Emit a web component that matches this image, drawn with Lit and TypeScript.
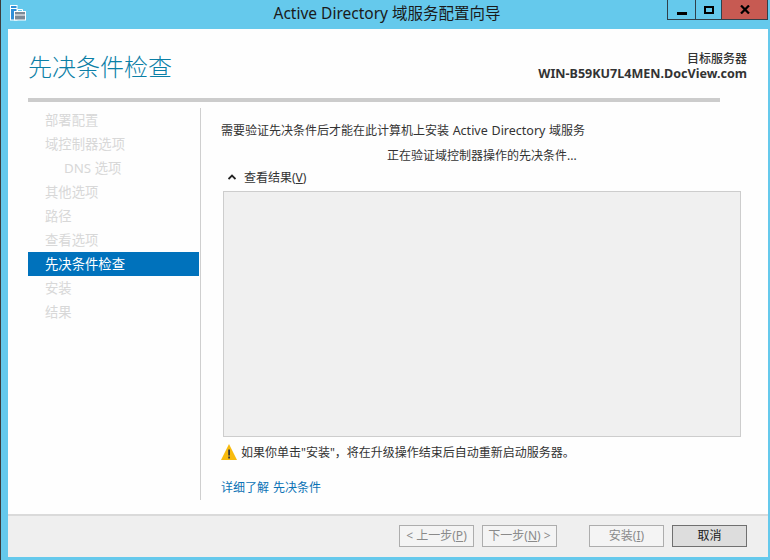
import { LitElement, html, css } from "lit";
import { customElement } from "lit/decorators.js";

const steps = [
  { t: "部署配置" },
  { t: "域控制器选项" },
  { t: "DNS 选项", sub: true },
  { t: "其他选项" },
  { t: "路径" },
  { t: "查看选项" },
  { t: "先决条件检查", on: true },
  { t: "安装" },
  { t: "结果" },
];

@customElement("app-root")
export class AppRoot extends LitElement {
  static styles = css`
    :host {
      display: block;
      width: 770px;
      height: 560px;
      font-family: "Noto Sans", "Noto Sans CJK SC", sans-serif;
      font-size: 12px;
      color: #333;
    }
    * { box-sizing: border-box; }
    .win {
      width: 770px;
      height: 560px;
      background: #65c9ec;
      border-left: 1px solid #3c3c3c;
      display: flex;
      flex-direction: column;
      overflow: hidden;
    }
    .bar {
      height: 29px;
      flex: none;
      display: grid;
      grid-template-columns: 101px 1fr 101px;
      align-items: start;
    }
    .bar-icon { padding: 5px 0 0 9px; display: flex; }
    .bar-title {
      text-align: center;
      font-size: 15.5px;
      line-height: 20px;
      padding: 3px 0 0 3px;
      color: #1a1a1a;
      white-space: nowrap;
    }
    .ctrls {
      display: flex;
      height: 20px;
      margin-left: -2px;
      width: 101px;
      border: 1px solid #30404a;
      border-top: 0;
    }
    .ctrl { display: flex; align-items: center; justify-content: center; height: 19px; }
    .ctrl.min { width: 28px; border-right: 1px solid #30404a; }
    .ctrl.max { width: 26px; border-right: 1px solid #30404a; }
    .ctrl.close { flex: 1; background: #c75a52; }
    .body {
      flex: 1;
      margin: 0 2px 3px 7px;
      background: #fefefe;
      display: flex;
      flex-direction: column;
      min-height: 0;
    }
    .head {
      height: 69px;
      flex: none;
      padding: 0 21px 0 20px;
      display: flex;
      justify-content: space-between;
    }
    h1 {
      margin: 0;
      padding-top: 18px;
      font-size: 24px;
      line-height: 40px;
      font-weight: 300;
      color: #0b7fa6;
    }
    .target {
      padding-top: 22px;
      text-align: right;
      font-size: 12.56px;
      line-height: 16px;
      font-weight: 700;
      color: #333;
    }
    .target div:first-child { font-weight: 500; font-size: 12px; line-height: 15px; }
    .rule { height: 4px; flex: none; margin: 0 48px 0 20px; background: #cccccc; }
    .main { flex: 1; display: flex; padding: 6px 0 0 20px; min-height: 0; }
    nav {
      width: 173px;
      flex: none;
      height: 392px;
      border-right: 1px solid #cfcfcf;
      padding-top: 0;
    }
    .step {
      width: 171px;
      height: 24px;
      line-height: 24px;
      padding-left: 17px;
      font-size: 13.33px;
      color: #d8d8d8;
      white-space: nowrap;
    }
    .step.sub { padding-left: 36px; }
    .step.on { background: #0072bc; color: #fff; }
    .pane { flex: 1; padding: 15px 27px 0 20px; min-width: 0; display: flex; flex-direction: column; }
    .intro { font-size: 12px; line-height: 16px; color: #333; white-space: nowrap; word-spacing: 0.5px; }
    .intro span { font-size: 12.5px; }
    .status { margin-top: 9px; line-height: 16px; padding-left: 166px; white-space: nowrap; }
    .toggle { margin-top: 2px; margin-bottom: 3px; height: 22px; display: flex; align-items: center; padding-left: 7px; gap: 8px; }
    .panel {
      margin-left: 2px;
      height: 246px;
      flex: none;
      background: #f0f0f0;
      border: 1px solid #cdcdcd;
    }
    .warn { margin-top: 5px; display: flex; align-items: center; gap: 4px; height: 20px; white-space: nowrap; }
    .link { margin-top: 18px; line-height: 16px; color: #0b72b5; word-spacing: 1px; }
    .foot {
      height: 43px;
      flex: none;
      background: #efefef;
      border-top: 2px solid #dadada;
      padding: 9px 21px 0 0;
      display: flex;
      justify-content: flex-end;
      gap: 8px;
    }
    .btn {
      width: 75px;
      height: 22px;
      border: 1px solid #adadad;
      background: #f4f4f4;
      color: #8a8a8a;
      font-size: 12px;
      line-height: 20px;
      text-align: center;
      white-space: nowrap;
    }
    .btn.gap { margin-left: 24px; }
    .btn.go { border-color: #707070; background: #dddddd; color: #1a1a1a; }
    u { text-decoration-thickness: 1px; text-underline-offset: 1px; }
  `;

  render() {
    return html`
      <div class="win">
        <div class="bar">
          <div class="bar-icon">
            <svg width="17" height="16" viewBox="0 0 17 16">
              <rect x="0.5" y="0.5" width="6.5" height="14.5" fill="#2f8fd8" stroke="#fff"></rect>
              <rect x="1" y="3" width="6" height="1" fill="#fff"></rect>
              <rect x="4.5" y="6.5" width="11" height="8.5" fill="#7c8a96" stroke="#fff"></rect>
              <path d="M7.5 6.5V4.5h5v2" fill="none" stroke="#fff"></path>
              <rect x="5" y="9.5" width="10" height="1" fill="#fff"></rect>
            </svg>
          </div>
          <div class="bar-title">Active Directory 域服务配置向导</div>
          <div class="ctrls">
            <div class="ctrl min">
              <svg width="10" height="10" viewBox="0 0 10 10"><rect y="7" width="10" height="3" fill="#000"></rect></svg>
            </div>
            <div class="ctrl max">
              <svg width="10" height="8" viewBox="0 0 10 8"><rect x="1" y="1" width="8" height="6" fill="none" stroke="#000" stroke-width="2"></rect></svg>
            </div>
            <div class="ctrl close">
              <svg width="10" height="9" viewBox="0 0 10 9"><path d="M1 0.5L9 8.5M9 0.5L1 8.5" stroke="#000" stroke-width="2.2"></path></svg>
            </div>
          </div>
        </div>
        <div class="body">
          <div class="head">
            <h1>先决条件检查</h1>
            <div class="target">
              <div>目标服务器</div>
              <div>WIN-B59KU7L4MEN.DocView.com</div>
            </div>
          </div>
          <div class="rule"></div>
          <div class="main">
            <nav>
              ${steps.map(
                (s) => html`<div class="step ${s.sub ? "sub" : ""} ${s.on ? "on" : ""}">${s.t}</div>`
              )}
            </nav>
            <div class="pane">
              <div class="intro">需要验证先决条件后才能在此计算机上安装 <span>Active Directory</span> 域服务</div>
              <div class="status">正在验证域控制器操作的先决条件...</div>
              <div class="toggle">
                <svg width="8" height="6" viewBox="0 0 8 6"><path d="M0.5 5L4 1.5L7.5 5" fill="none" stroke="#222" stroke-width="1.8"></path></svg>
                <span>查看结果(<u>V</u>)</span>
              </div>
              <div class="panel"></div>
              <div class="warn">
                <svg width="16" height="16" viewBox="0 0 16 16">
                  <path d="M8 0L16 16H0Z" fill="#f8bb0e"></path>
                  <rect x="7.2" y="5.5" width="1.8" height="6" fill="#3a3a3a"></rect>
                  <rect x="7.2" y="12.5" width="1.8" height="2" fill="#3a3a3a"></rect>
                </svg>
                <span>如果你单击"安装"，将在升级操作结束后自动重新启动服务器。</span>
              </div>
              <div class="link">详细了解 先决条件</div>
            </div>
          </div>
          <div class="foot">
            <div class="btn">&lt; 上一步(<u>P</u>)</div>
            <div class="btn">下一步(<u>N</u>) &gt;</div>
            <div class="btn gap">安装(<u>I</u>)</div>
            <div class="btn go">取消</div>
          </div>
        </div>
      </div>
    `;
  }
}
